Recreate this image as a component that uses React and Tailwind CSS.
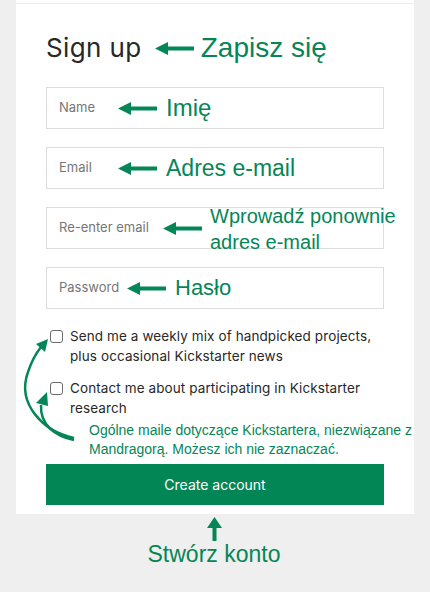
import React from "react";

const GREEN = "#058657";
const ARIAL = { fontFamily: "'Liberation Sans', Arial, sans-serif" };

function LeftArrow({ className = "" }) {
  return (
    <svg width="39" height="13" viewBox="0 0 39 13" className={className}>
      <polygon points="0,6.5 13,0 13,13" fill={GREEN} />
      <rect x="12" y="4.5" width="27" height="4" fill={GREEN} />
    </svg>
  );
}

function Field({ placeholder, children }) {
  return (
    <div className="relative flex h-[42px] items-center border border-[#dcdcdc] px-3 text-[13px] text-[#767676]">
      <span>{placeholder}</span>
      {children}
    </div>
  );
}

function CheckRow({ children }) {
  return (
    <label className="flex items-start gap-[7px] pl-1 text-[13.5px] leading-5 tracking-[0.1px] text-[#282828]">
      <span className="mt-[4px] h-[13px] w-[13px] shrink-0 rounded-[3px] border border-[#6b6b6b] bg-white" />
      <span className="whitespace-nowrap">{children}</span>
    </label>
  );
}

export default function App() {
  return (
    <div
      className="relative min-h-[592px] bg-[#efefef]"
      style={{ fontFamily: "Inter, 'Liberation Sans', sans-serif" }}
    >
      <div className="mx-4 bg-white pt-[3px] pb-[9px]">
        <div className="border-t border-[#efede8] px-[30px]">
          {/* heading */}
          <div className="mt-[28px] flex items-center">
            <h1 className="text-[26px] font-normal leading-8 tracking-[0.4px] text-[#282828]">Sign up</h1>
            <LeftArrow className="ml-[13px] mt-[1px]" />
            <span className="ml-[7px] whitespace-nowrap text-[28px] leading-8 text-[#058657]" style={ARIAL}>
              Zapisz się
            </span>
          </div>

          <div className="mt-[23px] flex flex-col gap-[18px]">
            <Field placeholder="Name">
              <div className="absolute left-[71px] top-[8px] flex items-center whitespace-nowrap">
                <LeftArrow />
                <span className="ml-[9px] text-[24px] leading-6 text-[#058657]" style={ARIAL}>
                  Imię
                </span>
              </div>
            </Field>
            <Field placeholder="Email">
              <div className="absolute left-[71px] top-[8px] flex items-center whitespace-nowrap">
                <LeftArrow />
                <span className="ml-[9px] text-[23px] leading-6 text-[#058657]" style={ARIAL}>
                  Adres e-mail
                </span>
              </div>
            </Field>
            <Field placeholder="Re-enter email">
              <LeftArrow className="absolute left-[116px] top-[14px]" />
              <span
                className="absolute left-[163px] top-[-5px] whitespace-nowrap text-[20px] leading-[26px] text-[#058657]"
                style={ARIAL}
              >
                Wprowadź ponownie
                <br />
                adres e-mail
              </span>
            </Field>
            <Field placeholder="Password">
              <div className="absolute left-[80px] top-[8px] flex items-center whitespace-nowrap">
                <LeftArrow />
                <span className="ml-[9px] text-[22px] leading-6 text-[#058657]" style={ARIAL}>
                  Hasło
                </span>
              </div>
            </Field>
          </div>

          <div className="mt-[17px] flex flex-col gap-[12px]">
            <CheckRow>
              Send me a weekly mix of handpicked projects,
              <br />
              plus occasional Kickstarter news
            </CheckRow>
            <CheckRow>
              Contact me about participating in Kickstarter
              <br />
              research
            </CheckRow>
          </div>

          <p className="mt-[3px] whitespace-nowrap pl-[43px] text-[14px] leading-[19px] text-[#058657]" style={ARIAL}>
            Ogólne maile dotyczące Kickstartera, niezwiązane z
            <br />
            Mandragorą. Możesz ich nie zaznaczać.
          </p>

          <button className="mt-[5px] flex h-[41px] w-full items-center justify-center bg-[#038656] text-[14px] text-white">
            Create account
          </button>
        </div>
      </div>

      <div className="flex flex-col items-center pr-[2px]">
        <svg width="15" height="24" viewBox="0 0 15 24" className="mt-[3px]">
          <polygon points="7.5,0 15,11 0,11" fill={GREEN} />
          <rect x="5.5" y="10" width="4" height="14" fill={GREEN} />
        </svg>
        <span className="-mt-[1px] text-[23px] leading-7 text-[#058657]" style={ARIAL}>
          Stwórz konto
        </span>
      </div>

      {/* curved annotation arrows */}
      <svg
        className="pointer-events-none absolute left-0 top-0"
        width="100"
        height="460"
        viewBox="0 0 100 460"
      >
        <path d="M74 438 C 45 432, 16 405, 28 372 C 32 360, 37 352, 41 347" stroke={GREEN} strokeWidth="2.5" fill="none" />
        <polygon points="48,339 36,344 45,352" fill={GREEN} />
        <path d="M74 440 C 55 436, 40 425, 41 405" stroke={GREEN} strokeWidth="2.5" fill="none" />
        <polygon points="47,392 36,403 48,406" fill={GREEN} />
      </svg>
    </div>
  );
}
